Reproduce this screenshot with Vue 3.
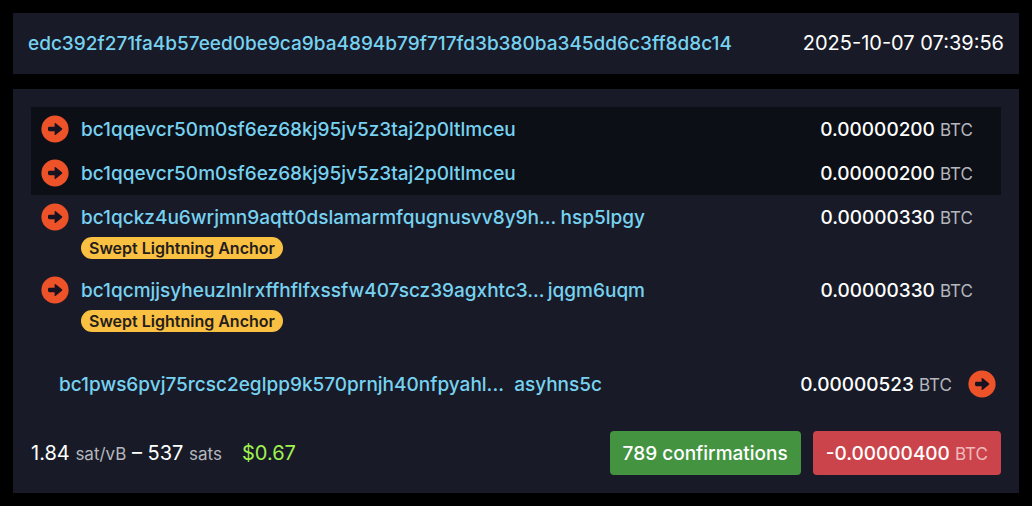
<script setup>
const txid = 'edc392f271fa4b57eed0be9ca9ba4894b79f717fd3b380ba345dd6c3ff8d8c14'

const inputs = [
  { head: 'bc1qqevcr50m0sf6ez68kj95jv5z3taj2p0ltlmceu', amount: '0.00000200', active: true },
  { head: 'bc1qqevcr50m0sf6ez68kj95jv5z3taj2p0ltlmceu', amount: '0.00000200', active: true },
  { head: 'bc1qckz4u6wrjmn9aqtt0dslamarmfqugnusvv8y9h...', tail: 'hsp5lpgy', amount: '0.00000330', label: 'Swept Lightning Anchor' },
  { head: 'bc1qcmjjsyheuzlnlrxffhflfxssfw407scz39agxhtc3...', tail: 'jqgm6uqm', amount: '0.00000330', label: 'Swept Lightning Anchor' },
]

const output = { head: 'bc1pws6pvj75rcsc2eglpp9k570prnjh40nfpyahl...', tail: 'asyhns5c', amount: '0.00000523' }
</script>

<template>
  <main class="page">
    <header class="panel head">
      <a class="link" href="#tx">{{ txid }}</a>
      <time datetime="2025-10-07T07:39:56">2025-10-07 07:39:56</time>
    </header>

    <section class="panel body">
      <ul class="list">
        <li v-for="(row, i) in inputs" :key="i" class="row" :class="{ active: row.active }">
          <a class="arrow" href="#input" aria-label="Input transaction">
            <svg viewBox="0 0 28 28" aria-hidden="true">
              <circle cx="14" cy="14" r="13.6" />
              <path d="M8.4 11.8H13.6V8.8q0-1.5 1.2-.5L20.9 13.2q.9.8 0 1.6L14.8 19.7q-1.2 1-1.2-.5V16.2H8.4Q7 16.2 7 14.8V13.2Q7 11.8 8.4 11.8Z" />
            </svg>
          </a>
          <div class="who">
            <a class="link address" :class="{ cut: row.tail }" href="#address">
              <span>{{ row.head }}</span><span v-if="row.tail">{{ row.tail }}</span>
            </a>
            <span v-if="row.label" class="badge">{{ row.label }}</span>
          </div>
          <span class="amount">{{ row.amount }} <small>BTC</small></span>
        </li>
      </ul>

      <div class="row out">
        <div class="who">
          <a class="link address cut" href="#address">
            <span>{{ output.head }}</span><span>{{ output.tail }}</span>
          </a>
        </div>
        <span class="amount">{{ output.amount }} <small>BTC</small></span>
        <a class="arrow" href="#output" aria-label="Spending transaction">
          <svg viewBox="0 0 28 28" aria-hidden="true">
            <circle cx="14" cy="14" r="13.6" />
            <path d="M8.4 11.8H13.6V8.8q0-1.5 1.2-.5L20.9 13.2q.9.8 0 1.6L14.8 19.7q-1.2 1-1.2-.5V16.2H8.4Q7 16.2 7 14.8V13.2Q7 11.8 8.4 11.8Z" />
          </svg>
        </a>
      </div>

      <footer class="foot">
        <p class="fee">1.84 <small>sat/vB</small> – 537 <small>sats</small><span class="fiat">$0.67</span></p>
        <div class="actions">
          <button type="button" class="btn green">789 confirmations</button>
          <button type="button" class="btn red">-0.00000400 <small>BTC</small></button>
        </div>
      </footer>
    </section>
  </main>
</template>

<style>
body {
  margin: 0;
  background: #000;
}
</style>

<style scoped>
.page {
  display: flex;
  flex-direction: column;
  gap: 15px;
  padding: 13px;
  color: #fff;
  font: 500 19px/31px Inter, "Liberation Sans", sans-serif;
}

.panel {
  background: #181b27;
}

.head {
  display: flex;
  justify-content: space-between;
  align-items: center;
  padding: 15px;
}

.head time,
.fee {
  font-size: 20px;
  font-weight: 400;
}

.link {
  color: #77d2f1;
  text-decoration: none;
}

.body {
  padding: 18px;
}

.list {
  margin: 0;
  padding: 0;
  list-style: none;
}

.row {
  display: flex;
  align-items: flex-start;
  padding: 7px 28px 6px 10px;
}

.active {
  background: #0c0f16;
}

.arrow {
  flex: none;
  width: 28px;
  height: 28px;
  margin-top: 1px;
}

.arrow svg {
  display: block;
  width: 28px;
  height: 28px;
}

.arrow circle {
  fill: #ee5229;
}

.arrow path {
  fill: #181320;
}

.who {
  flex: 1;
  display: flex;
  flex-direction: column;
  align-items: flex-start;
  margin-left: 12px;
}

.address {
  display: flex;
  justify-content: space-between;
  white-space: nowrap;
}

.cut {
  width: 100%;
  max-width: 564px;
}

.badge {
  margin: 4px 0 3px;
  padding: 0 8px;
  border-radius: 11px;
  background: #fac042;
  color: #241d1b;
  font-size: 16px;
  font-weight: 600;
  line-height: 22px;
}

.amount {
  white-space: nowrap;
}

small {
  color: #b5b7bd;
  font-size: 17px;
  font-weight: 400;
  line-height: 1;
}

.out {
  margin-top: 21px;
  padding: 7px 5px 6px 28px;
}

.out .who {
  margin-left: 0;
}

.out .cut {
  max-width: 543px;
}

.out .arrow {
  margin-left: 16px;
}

.foot {
  display: flex;
  justify-content: space-between;
  align-items: center;
  margin-top: 25px;
}

.fee {
  margin: 0;
}

.fiat {
  margin-left: 20px;
  color: #a0f150;
}

.actions {
  display: flex;
  gap: 12px;
}

.btn {
  padding: 7px 13px 6px;
  border: 0;
  border-radius: 4px;
  color: #fff;
  font: inherit;
}

.btn small {
  color: #f0b9bd;
}

.green {
  background: #449341;
}

.red {
  background: #cc444b;
}
</style>
